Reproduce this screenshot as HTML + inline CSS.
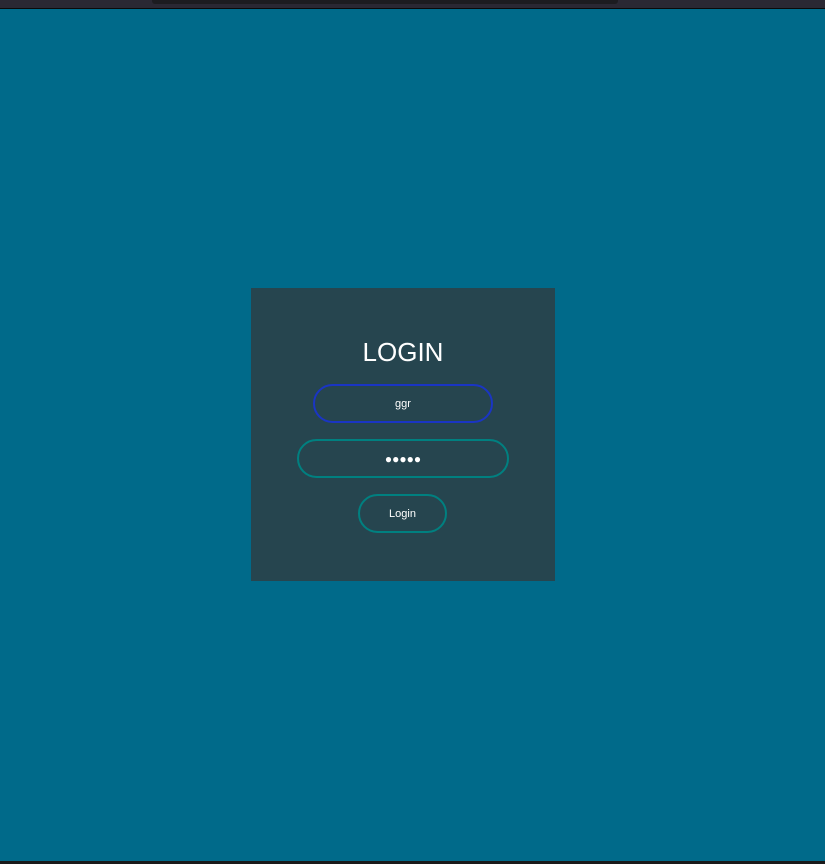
<!DOCTYPE html>
<html><head><style>
html,body{margin:0;padding:0;width:825px;height:864px;overflow:hidden;background:#006a8a;font-family:"Liberation Sans",sans-serif;}
.top{position:absolute;left:0;top:0;width:825px;height:8px;background:#2a2833;}
.top .in{position:absolute;left:152px;top:0;width:466px;height:4px;background:#1c1c20;border-radius:0 0 3px 3px;}
.line{position:absolute;left:0;top:8px;width:825px;height:1px;background:#0a0a0a;}
.bot{position:absolute;left:0;top:861px;width:825px;height:3px;background:#1a1a1a;}
.box{position:absolute;left:251px;top:288px;width:304px;height:293px;background:#26454f;}
h1{position:absolute;left:0;width:304px;top:49px;margin:0;text-align:center;color:#fff;font-weight:normal;font-size:26px;}
.f{position:absolute;box-sizing:border-box;border-radius:20px;color:#fff;text-align:center;font-size:11px;display:flex;align-items:center;justify-content:center;}
</style></head><body>
<div class="top"><div class="in"></div></div><div class="line"></div>
<div class="box">
<h1>LOGIN</h1>
<div class="f" style="left:62px;top:96px;width:180px;height:39px;border:2px solid #1a35c4;">ggr</div>
<div class="f" style="left:46px;top:151px;width:212px;height:39px;border:2px solid #008080;font-size:12px;">●●●●●</div>
<div class="f" style="left:107px;top:206px;width:89px;height:39px;border:2px solid #008080;padding-top:1px;">Login</div>
</div>
<div class="bot"></div>
</body></html>
